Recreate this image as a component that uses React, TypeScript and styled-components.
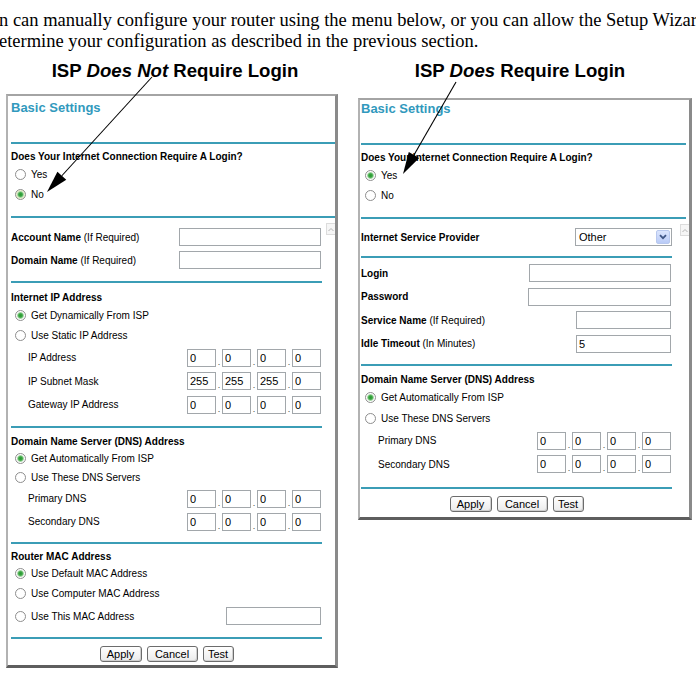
import React from "react";
import styled, { createGlobalStyle } from "styled-components";

const GlobalStyle = createGlobalStyle`
  html, body { margin: 0; padding: 0; background: #ffffff; }
  body { width: 696px; height: 681px; overflow: hidden; }
`;

const Page = styled.div`
  position: relative;
  width: 696px;
  height: 681px;
  overflow: hidden;
`;

const Intro = styled.p`
  margin: 10px 0 0 -1px;
  font-family: "Liberation Serif", "Times New Roman", serif;
  font-size: 18.5px;
  line-height: 21px;
  color: #000;
  white-space: nowrap;
`;

const Columns = styled.div`
  display: grid;
  grid-template-columns: 332px 334px;
  column-gap: 20px;
  padding-left: 6px;
  margin-top: 8px;
  align-items: start;
`;

const Column = styled.div`
  display: flex;
  flex-direction: column;
`;

const Caption = styled.h2<{ $padL: number; $padR: number }>`
  margin: 0;
  padding: 0 ${(p) => p.$padR}px 0 ${(p) => p.$padL}px;
  font-family: "Liberation Sans", Arial, sans-serif;
  font-size: 18.6px;
  line-height: 21px;
  font-weight: bold;
  text-align: center;
  color: #000;
  white-space: nowrap;
`;

const Panel = styled.section<{ $top: number; $inset: number }>`
  margin-top: ${(p) => p.$top}px;
  background: #fff;
  border-top: 2px solid #a4a4a4;
  border-left: 2px solid #b2b2b2;
  border-right: 3px solid #8a8a8a;
  border-bottom: 3px solid #5e5e5e;
  padding-left: ${(p) => p.$inset}px;
  font-family: "Liberation Sans", Arial, sans-serif;
  font-size: 10px;
  color: #000;
`;

const Title = styled.div<{ $h: number; $pt: number }>`
  box-sizing: border-box;
  height: ${(p) => p.$h}px;
  padding-top: ${(p) => p.$pt}px;
  font-size: 13px;
  line-height: 15px;
  font-weight: bold;
  color: #3199bd;
`;

const Rule = styled.div<{ $trim?: number }>`
  flex: none;
  height: 2px;
  margin-right: ${(p) => p.$trim ?? 0}px;
  background: #3b9db6;
`;

const Block = styled.div<{ $pt: number; $pb: number }>`
  display: flex;
  flex-direction: column;
  padding: ${(p) => p.$pt}px 0 ${(p) => p.$pb}px;
`;

const Heading = styled.div<{ $h?: number }>`
  display: flex;
  align-items: center;
  height: ${(p) => p.$h ?? 15}px;
  font-weight: bold;
  white-space: nowrap;
`;

const Option = styled.div<{ $h?: number }>`
  display: flex;
  align-items: center;
  gap: 5px;
  height: ${(p) => p.$h ?? 20}px;
  padding: 0 1px 0 4px;
  white-space: nowrap;
`;

const Radio = styled.span<{ $on?: boolean; $hover?: boolean }>`
  box-sizing: border-box;
  flex: none;
  width: 11px;
  height: 11px;
  border-radius: 50%;
  border: 1px solid #8e8e8e;
  background: ${(p) => {
    const base = p.$hover ? "#edf2cf" : "#ffffff";
    return p.$on
      ? `radial-gradient(circle at 50% 50%, #2c9733 0, #3aa742 1.8px, #a6d6a6 3px, ${base} 3.8px)`
      : base;
  }};
`;

const Field = styled.div<{ $h?: number; $indent?: number }>`
  display: flex;
  align-items: center;
  justify-content: space-between;
  height: ${(p) => p.$h ?? 23.5}px;
  padding: 0 1px 0 ${(p) => p.$indent ?? 0}px;
  white-space: nowrap;
`;

const Label = styled.span`
  b {
    font-weight: bold;
  }
`;

const TextBox = styled.input<{ $w: number; $push?: boolean }>`
  box-sizing: border-box;
  width: ${(p) => p.$w}px;
  height: 18px;
  margin: 0 0 0 ${(p) => (p.$push ? "auto" : "0")};
  padding: 0 2px;
  border: 1px solid #a2a7ab;
  background: #fff;
  font-family: "Liberation Sans", Arial, sans-serif;
  font-size: 11px;
  color: #000;
  outline: none;
`;

const IpGroup = styled.div`
  display: flex;
  align-items: flex-end;
`;

const IpDot = styled.span`
  width: 6px;
  text-align: center;
  font-size: 9px;
  line-height: 9px;
  color: #444;
`;

const Dropdown = styled.div`
  box-sizing: border-box;
  display: flex;
  align-items: center;
  justify-content: space-between;
  width: 97px;
  height: 18px;
  margin-right: -1px;
  padding: 1px 1px 1px 3px;
  border: 1px solid #a2a7ab;
  background: #fff;
  font-size: 11px;
`;

const DropButton = styled.span`
  box-sizing: border-box;
  display: flex;
  align-items: center;
  justify-content: center;
  width: 14px;
  height: 14px;
  border: 1px solid #b8c8ee;
  border-radius: 2px;
  background: linear-gradient(#dbe5fd, #b9cbf7);
`;

const Lower = styled.div`
  display: flex;
`;

const Main = styled.div`
  flex: none;
  width: 311px;
  display: flex;
  flex-direction: column;
`;

const Gutter = styled.div`
  flex: 1;
  display: flex;
  flex-direction: column;
  align-items: flex-end;
  padding-top: 5px;
`;

const ScrollUp = styled.span`
  box-sizing: border-box;
  display: flex;
  align-items: center;
  justify-content: center;
  width: 9px;
  height: 12px;
  border: 1px solid #dcdcdc;
  border-right: none;
  background: #f6f6f6;
`;

const ButtonBar = styled.div<{ $pt: number; $pb: number }>`
  display: flex;
  justify-content: center;
  gap: 5px;
  padding: ${(p) => p.$pt}px 0 ${(p) => p.$pb}px;
`;

const Btn = styled.button<{ $w: number }>`
  box-sizing: border-box;
  width: ${(p) => p.$w}px;
  height: 16px;
  padding: 0;
  border: 1px solid #6c6c6c;
  border-radius: 3px;
  background: linear-gradient(#ffffff, #ebebeb);
  box-shadow: inset -1px -1px 0 #cfcfcf;
  font-family: "Liberation Sans", Arial, sans-serif;
  font-size: 11px;
  line-height: 14px;
  color: #000;
`;

const Callouts = styled.svg`
  position: absolute;
  top: 0;
  left: 0;
  pointer-events: none;
`;

const Ip = ({ values }: { values: string[] }) => (
  <IpGroup>
    {values.map((v, i) => (
      <React.Fragment key={i}>
        {i > 0 && <IpDot>.</IpDot>}
        <TextBox $w={29} defaultValue={v} readOnly />
      </React.Fragment>
    ))}
  </IpGroup>
);

const Arrow = () => (
  <svg width="6" height="5" viewBox="0 0 6 5">
    <path d="M0.5 4 L3 1.5 L5.5 4" fill="none" stroke="#b4b4b4" strokeWidth="1" />
  </svg>
);

const Chevron = () => (
  <svg width="8" height="6" viewBox="0 0 8 6">
    <path d="M1 1.2 L4 4.2 L7 1.2" fill="none" stroke="#3f5685" strokeWidth="1.8" />
  </svg>
);

const Buttons = ({ pt, pb }: { pt: number; pb: number }) => (
  <ButtonBar $pt={pt} $pb={pb}>
    <Btn $w={42}>Apply</Btn>
    <Btn $w={51}>Cancel</Btn>
    <Btn $w={31}>Test</Btn>
  </ButtonBar>
);

const zeros = ["0", "0", "0", "0"];

// point-to-point callout line ending in a filled arrowhead
const callout = (x1: number, y1: number, x2: number, y2: number) => {
  const dx = x2 - x1;
  const dy = y2 - y1;
  const len = Math.hypot(dx, dy);
  const ux = dx / len;
  const uy = dy / len;
  const bx = x2 - ux * 22;
  const by = y2 - uy * 22;
  const px = -uy * 6;
  const py = ux * 6;
  return {
    line: `M${x1} ${y1} L${bx} ${by}`,
    head: `M${x2} ${y2} L${bx + px} ${by + py} L${bx - px} ${by - py} Z`,
  };
};

const leftCallout = callout(152, 77, 47, 192);
const rightCallout = callout(456, 82, 403, 174);

export default function App() {
  return (
    <Page>
      <GlobalStyle />
      <Intro>
        n can manually configure your router using the menu below, or you can allow the Setup Wizard
        <br />
        etermine your configuration as described in the previous section.
      </Intro>

      <Columns>
        <Column>
          <Caption $padL={6} $padR={0}>
            ISP <i>Does Not</i> Require Login
          </Caption>
          <Panel $top={13} $inset={3}>
            <Title $h={46} $pt={4}>Basic Settings</Title>
            <Rule />
            <Block $pt={5} $pb={12}>
              <Heading>Does Your Internet Connection Require A Login?</Heading>
              <Option>
                <Radio />
                Yes
              </Option>
              <Option>
                <Radio $on $hover />
                No
              </Option>
            </Block>
            <Rule />
            <Lower>
              <Main>
                <Block $pt={7.5} $pb={9.5}>
                  <Field $h={23}>
                    <Label>
                      <b>Account Name</b> (If Required)
                    </Label>
                    <TextBox $w={142} readOnly />
                  </Field>
                  <Field $h={23}>
                    <Label>
                      <b>Domain Name</b> (If Required)
                    </Label>
                    <TextBox $w={142} readOnly />
                  </Field>
                </Block>
                <Rule />
                <Block $pt={7} $pb={9.5}>
                  <Heading>Internet IP Address</Heading>
                  <Option $h={20.5}>
                    <Radio $on />
                    Get Dynamically From ISP
                  </Option>
                  <Option $h={20.5}>
                    <Radio />
                    Use Static IP Address
                  </Option>
                  <Field $indent={17}>
                    <Label>IP Address</Label>
                    <Ip values={zeros} />
                  </Field>
                  <Field $indent={17}>
                    <Label>IP Subnet Mask</Label>
                    <Ip values={["255", "255", "255", "0"]} />
                  </Field>
                  <Field $indent={17}>
                    <Label>Gateway IP Address</Label>
                    <Ip values={zeros} />
                  </Field>
                </Block>
                <Rule />
                <Block $pt={5} $pb={9}>
                  <Heading $h={16}>Domain Name Server (DNS) Address</Heading>
                  <Option $h={19}>
                    <Radio $on />
                    Get Automatically From ISP
                  </Option>
                  <Option $h={19}>
                    <Radio />
                    Use These DNS Servers
                  </Option>
                  <Field $h={23} $indent={17}>
                    <Label>Primary DNS</Label>
                    <Ip values={zeros} />
                  </Field>
                  <Field $h={23} $indent={17}>
                    <Label>Secondary DNS</Label>
                    <Ip values={zeros} />
                  </Field>
                </Block>
                <Rule />
                <Block $pt={5} $pb={8}>
                  <Heading>Router MAC Address</Heading>
                  <Option $h={19.5}>
                    <Radio $on />
                    Use Default MAC Address
                  </Option>
                  <Option $h={19.5}>
                    <Radio />
                    Use Computer MAC Address
                  </Option>
                  <Option $h={26}>
                    <Radio />
                    Use This MAC Address
                    <TextBox $w={95} $push readOnly />
                  </Option>
                </Block>
                <Rule />
                <Buttons pt={7} pb={3} />
              </Main>
              <Gutter>
                <ScrollUp>
                  <Arrow />
                </ScrollUp>
              </Gutter>
            </Lower>
          </Panel>
        </Column>

        <Column>
          <Caption $padL={0} $padR={10}>
            ISP <i>Does</i> Require Login
          </Caption>
          <Panel $top={17} $inset={1}>
            <Title $h={43} $pt={1}>Basic Settings</Title>
            <Rule $trim={3} />
            <Block $pt={5} $pb={12}>
              <Heading>Does Your Internet Connection Require A Login?</Heading>
              <Option>
                <Radio $on />
                Yes
              </Option>
              <Option>
                <Radio />
                No
              </Option>
            </Block>
            <Rule $trim={3} />
            <Lower>
              <Main>
                <Block $pt={6.5} $pb={7.5}>
                  <Field $h={23}>
                    <Label>
                      <b>Internet Service Provider</b>
                    </Label>
                    <Dropdown>
                      Other
                      <DropButton>
                        <Chevron />
                      </DropButton>
                    </Dropdown>
                  </Field>
                </Block>
                <Rule />
                <Block $pt={3.25} $pb={8.75}>
                  <Field>
                    <Label>
                      <b>Login</b>
                    </Label>
                    <TextBox $w={142} readOnly />
                  </Field>
                  <Field>
                    <Label>
                      <b>Password</b>
                    </Label>
                    <TextBox $w={143} readOnly />
                  </Field>
                  <Field>
                    <Label>
                      <b>Service Name</b> (If Required)
                    </Label>
                    <TextBox $w={95} readOnly />
                  </Field>
                  <Field>
                    <Label>
                      <b>Idle Timeout</b> (In Minutes)
                    </Label>
                    <TextBox $w={95} defaultValue="5" readOnly />
                  </Field>
                </Block>
                <Rule />
                <Block $pt={6} $pb={11}>
                  <Heading>Domain Name Server (DNS) Address</Heading>
                  <Option $h={21}>
                    <Radio $on />
                    Get Automatically From ISP
                  </Option>
                  <Option $h={21}>
                    <Radio />
                    Use These DNS Servers
                  </Option>
                  <Field $indent={17}>
                    <Label>Primary DNS</Label>
                    <Ip values={zeros} />
                  </Field>
                  <Field $indent={17}>
                    <Label>Secondary DNS</Label>
                    <Ip values={zeros} />
                  </Field>
                </Block>
                <Rule />
                <Buttons pt={7} pb={5} />
              </Main>
              <Gutter>
                <ScrollUp>
                  <Arrow />
                </ScrollUp>
              </Gutter>
            </Lower>
          </Panel>
        </Column>
      </Columns>

      <Callouts width="696" height="681" viewBox="0 0 696 681">
        <path d={leftCallout.line} stroke="#000" strokeWidth="1.1" fill="none" />
        <path d={leftCallout.head} fill="#000" />
        <path d={rightCallout.line} stroke="#000" strokeWidth="1.1" fill="none" />
        <path d={rightCallout.head} fill="#000" />
      </Callouts>
    </Page>
  );
}
